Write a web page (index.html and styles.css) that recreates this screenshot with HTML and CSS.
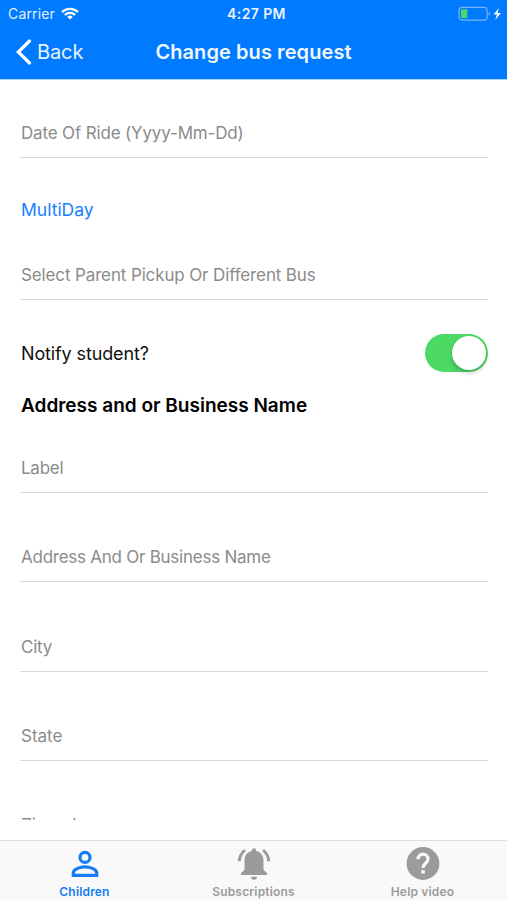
FILE: index.html
```html
<!DOCTYPE html>
<html lang="en">
<head>
<meta charset="utf-8">
<title>Change bus request</title>
<link rel="stylesheet" href="styles.css">
</head>
<body>
<header class="header">
  <div class="status">
    <div class="status-left"><span class="carrier">Carrier</span>
      <svg class="wifi" viewBox="0 0 18 13" fill="none" stroke="#fff" stroke-width="2.2"><path d="M1 5.1a11.4 11.4 0 0 1 16 0M3.9 8a7.3 7.3 0 0 1 10.2 0"/><path d="M9 12.6 6.3 9.9a3.9 3.9 0 0 1 5.4 0z" fill="#fff" stroke="none"/></svg>
    </div>
    <span class="time">4:27 PM</span>
    <div class="status-right">
      <svg class="battery" viewBox="0 0 44 16"><rect x="1" y="1.3" width="28.2" height="12.8" rx="3.2" fill="none" stroke="#73b5ff" stroke-width="1.2"/><rect x="3" y="3.3" width="6.3" height="8.8" rx="1" fill="#4cd964"/><path d="M30.7 5.5q3 2.2 0 4.4z" fill="#73b5ff"/><path d="m41 2-5.5 6.6H39L37.2 14l5.7-7h-3.4z" fill="#fff"/></svg>
    </div>
  </div>
  <nav class="nav">
    <a class="back"><svg class="chevron" viewBox="0 0 16 26" fill="none" stroke="#fff" stroke-width="3.2" stroke-linecap="round"><path d="M14.5 2 3.3 13 14.5 24"/></svg><span>Back</span></a>
    <h1 class="title">Change bus request</h1>
  </nav>
</header>
<main class="form">
  <div class="field first"><span class="t-date">Date Of Ride (Yyyy-Mm-Dd)</span></div>
  <a class="multiday">MultiDay</a>
  <div class="field pickup"><span class="t-pickup">Select Parent Pickup Or Different Bus</span></div>
  <div class="notify"><span class="t-notify">Notify student?</span><span class="switch"><span class="knob"></span></span></div>
  <h2 class="section">Address and or Business Name</h2>
  <div class="field label"><span class="t-label">Label</span></div>
  <div class="field"><span class="t-address">Address And Or Business Name</span></div>
  <div class="field"><span class="t-city">City</span></div>
  <div class="field"><span>State</span></div>
  <div class="field"><span>Zipcode</span></div>
</main>
<footer class="tabs">
  <a class="tab active"><svg class="icon" viewBox="0 0 40 40" fill="none" stroke="currentColor" stroke-width="3.2"><circle cx="20" cy="13.4" r="5"/><path d="M8.3 31.4v-2.6c0-3.8 7.3-6 11.7-6s11.7 2.2 11.7 6v2.6z"/></svg><span>Children</span></a>
  <a class="tab"><svg class="icon" viewBox="0 0 40 40" fill="currentColor"><path d="M17.8 6.4a2.2 2.2 0 0 1 4.4 0v.7c5.1 1.2 7.3 4.6 7.3 9.6v9l3.6 3.6V31H6.9v-1.7l3.6-3.6v-9c0-5 2.2-8.4 7.3-9.6zM17 32.7h6a3 3 0 0 1-6 0z"/><path d="M5.3 17.2c.2-4.4 2-8.3 5.7-11.1M34.7 17.2c-.2-4.4-2-8.3-5.7-11.1" fill="none" stroke="currentColor" stroke-width="3"/></svg><span>Subscriptions</span></a>
  <a class="tab"><svg class="icon" viewBox="0 0 40 40"><circle cx="20" cy="19.5" r="16.4" fill="currentColor"/><path d="M15 15.2c0-3 2.2-5 5-5s5 2 5 4.8c0 4.2-5 4.3-5 9" fill="none" stroke="#f9f9f9" stroke-width="3.2"/><path d="M18.3 26.2h3.5v3.4h-3.5z" fill="#f9f9f9"/></svg><span>Help video</span></a>
</footer>
</body>
</html>
```
FILE: styles.css
```css
* { box-sizing: border-box; }
body {
  margin: 0;
  height: 900px;
  display: flex;
  flex-direction: column;
  overflow: hidden;
  background: #fff;
  color: #111;
  font-family: Inter, "Liberation Sans", sans-serif;
}
h1, h2 { margin: 0; }
svg { display: block; }
.header { height: 79px; flex: none; background: #007aff; color: #fff; box-shadow: 0 1px 0 #a5d0ff; }
.status { height: 27px; display: grid; grid-template-columns: 1fr auto 1fr; align-items: center; padding: 0 5px 0 8px; }
.status-left { display: flex; align-items: center; gap: 6px; }
.carrier { font-size: 14px; letter-spacing: .15px; color: #e0efff; }
.wifi { width: 18px; height: 13px; }
.time { padding-left: 3px; font-size: 14px; font-weight: 600; letter-spacing: .4px; color: #e8f4ff; }
.status-right { display: flex; justify-content: flex-end; }
.battery { width: 44px; height: 16px; }
.nav { height: 50px; display: grid; grid-template-columns: 1fr auto 1fr; align-items: center; padding: 0 15px; }
.back { display: flex; align-items: center; gap: 6px; font-size: 20px; letter-spacing: -.1px; color: #e8f3ff; }
.chevron { width: 16px; height: 26px; }
.title { font-size: 20px; font-weight: 600; line-height: 24px; letter-spacing: .08px; color: #f0f8ff; }
.form { height: 741px; flex: none; overflow: hidden; padding: 0 19px 0 20px; }
.field {
  height: 89.3px;
  display: flex;
  align-items: flex-end;
  padding: 0 1px 12px;
  border-bottom: 1px solid #d9d9d9;
  font-size: 17px;
  line-height: 24px;
  color: #8b8b8b;
  white-space: nowrap;
}
.t-date { letter-spacing: -.16px; }
.t-pickup { letter-spacing: -.13px; }
.t-label, .t-city { letter-spacing: -.25px; }
.t-address { letter-spacing: -.25px; }
.t-notify { letter-spacing: -.13px; }
.field.first { height: 79px; }
.multiday { display: block; height: 52px; margin-top: 40px; padding-left: 1px; font-size: 17.5px; line-height: 24px; color: #1681ff; }
.field.pickup { height: 50px; }
.notify { height: 68px; margin-top: 19px; margin-bottom: 1px; display: flex; align-items: center; justify-content: space-between; padding-left: 1px; font-size: 18px; }
.switch { width: 63px; height: 38px; padding: 2px; border-radius: 19px; background: #4cd964; display: flex; justify-content: flex-end; }
.knob { width: 34px; height: 34px; border-radius: 50%; background: #fff; box-shadow: 0 3px 5px rgba(0, 0, 0, .2); }
.section { height: 36px; padding-left: 1px; font-size: 19px; font-weight: 600; line-height: 36px; color: #000; }
.field.label { height: 69px; }
.tabs { height: 60px; flex: none; margin-top: 20px; display: grid; grid-template-columns: repeat(3, 1fr); border-top: 1px solid #dedede; background: #f9f9f9; }
.tab { display: flex; flex-direction: column; align-items: center; padding-top: 3px; color: #9b9b9b; font-size: 12px; font-weight: 600; line-height: 16px; letter-spacing: .17px; }
.tab.active { color: #147cf5; }
.icon { width: 40px; height: 40px; }
```
